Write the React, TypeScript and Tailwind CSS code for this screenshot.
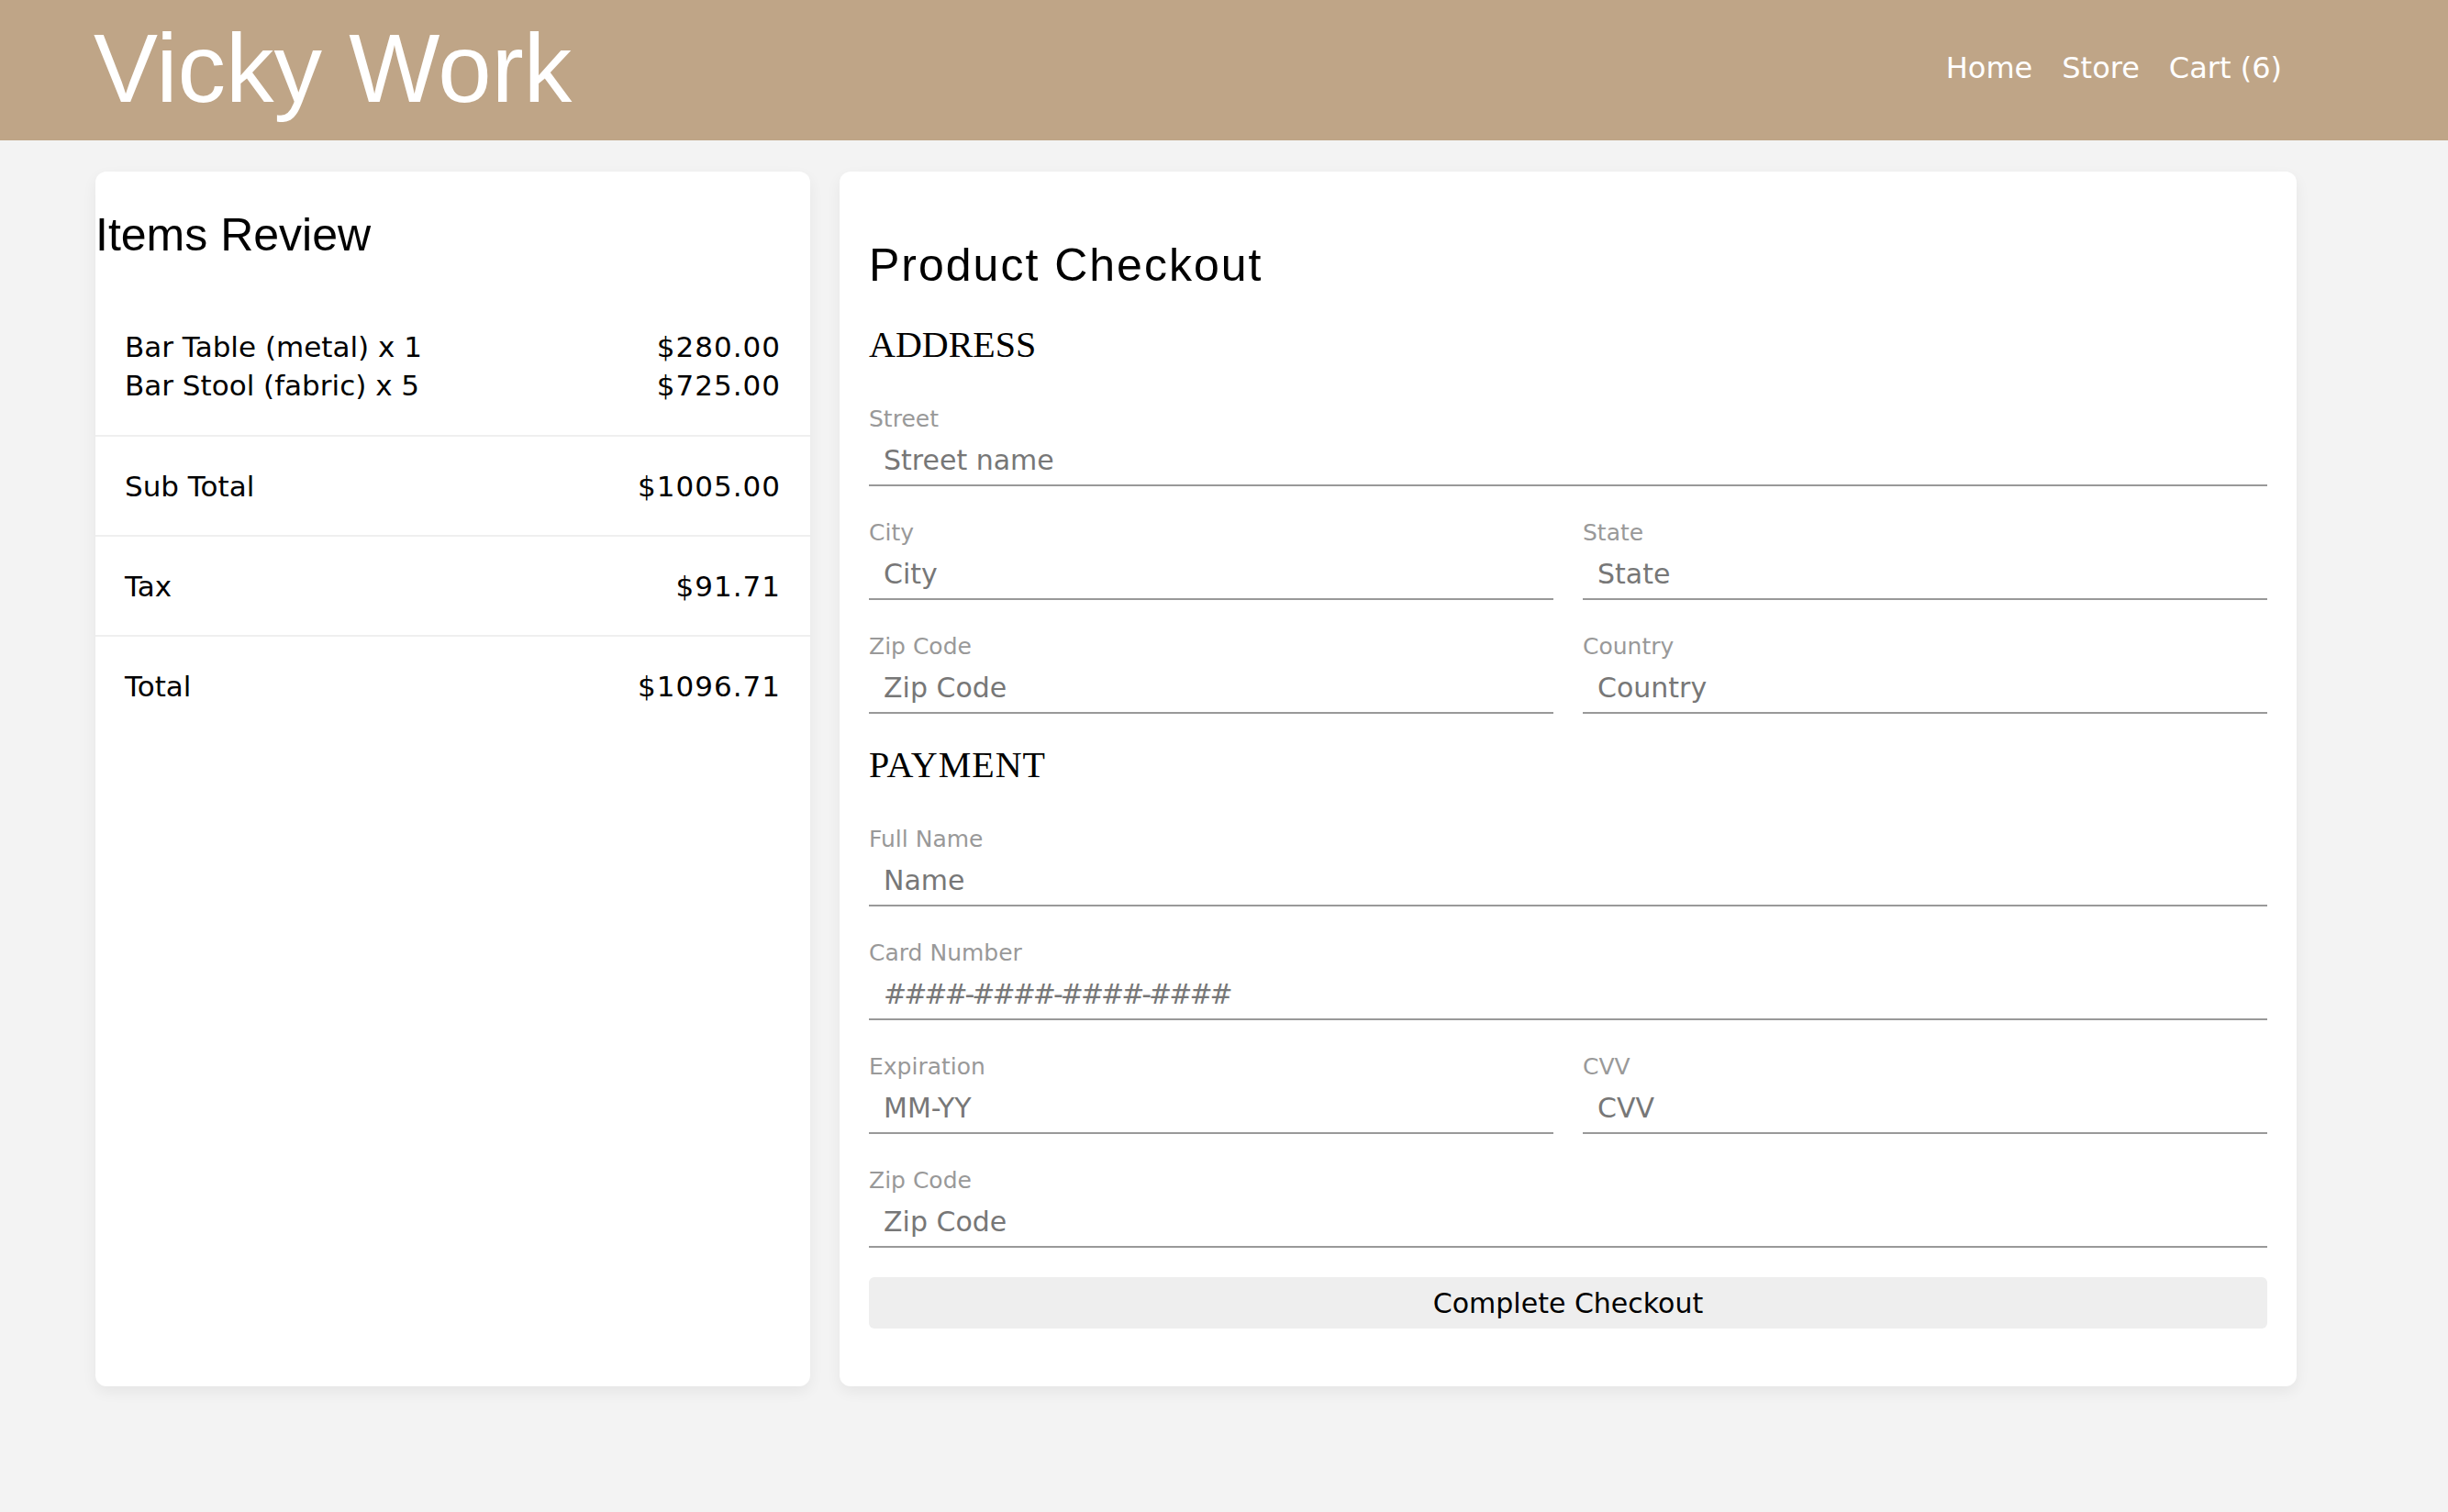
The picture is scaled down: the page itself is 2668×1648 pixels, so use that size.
import React from 'react';

const items = [
  { name: 'Bar Table (metal) x 1', price: '$280.00' },
  { name: 'Bar Stool (fabric) x 5', price: '$725.00' },
];

const totals = [
  { label: 'Sub Total', value: '$1005.00' },
  { label: 'Tax', value: '$91.71' },
  { label: 'Total', value: '$1096.71' },
];

type FieldProps = {
  label: string;
  placeholder: string;
  className?: string;
  inputClass?: string;
};

const Field: React.FC<FieldProps> = ({ label, placeholder, className = '', inputClass = '' }) => (
  <div className={`flex flex-col ${className}`}>
    <label className="text-[25px] leading-none text-[#999999]">{label}</label>
    <input
      type="text"
      placeholder={placeholder}
      className={`mt-[5px] h-[56px] w-full border-b-2 border-[#999999] bg-transparent px-4 text-[30px] text-[#555555] outline-none placeholder:text-[#777777] ${inputClass}`}
    />
  </div>
);

const App: React.FC = () => {
  return (
    <div className="min-h-[1648px] bg-[#f3f3f3] font-['DejaVu_Sans',sans-serif] text-black">
      <header className="flex h-[153px] items-center justify-between bg-[#bfa587] pb-[5px] pl-[102px] pr-[181px]">
        <h1 className="font-['Liberation_Sans',Arial,sans-serif] text-[105px] leading-none text-white">
          Vicky Work
        </h1>
        <nav className="flex items-center gap-8 text-[32px] text-white">
          <a href="#">Home</a>
          <a href="#">Store</a>
          <a href="#">Cart (6)</a>
        </nav>
      </header>

      <main className="grid grid-cols-[779px_1588px] gap-8 pl-[104px] pt-[34px]">
        <section className="flex flex-col rounded-[12px] bg-white shadow-[0_6px_16px_rgba(0,0,0,0.06)]">
          <h2 className="mt-[44px] mb-[44px] font-['Liberation_Sans',Arial,sans-serif] text-[50px] leading-none">
            Items Review
          </h2>
          <div className="px-8 pt-8 pb-[33px] text-[31px] leading-[42px]">
            {items.map((item) => (
              <div key={item.name} className="flex justify-between">
                <span>{item.name}</span>
                <span className="tracking-[1px]">{item.price}</span>
              </div>
            ))}
          </div>
          {totals.map((row) => (
            <div
              key={row.label}
              className="flex justify-between border-t-2 border-[#efefef] px-8 pt-[33px] pb-[32px] text-[31px] leading-[42px]"
            >
              <span>{row.label}</span>
              <span className="tracking-[1px]">{row.value}</span>
            </div>
          ))}
        </section>

        <section className="flex flex-col rounded-[12px] bg-white px-8 pb-[63px] shadow-[0_6px_16px_rgba(0,0,0,0.06)]">
          <h2 className="mt-[77px] font-['Liberation_Sans',Arial,sans-serif] text-[50px] leading-none tracking-[2px]">
            Product Checkout
          </h2>

          <h3 className="mt-[42px] font-['Liberation_Serif','Times_New_Roman',serif] text-[40px] leading-none">
            ADDRESS
          </h3>
          <div className="mt-[48px] grid grid-cols-2 gap-x-8 gap-y-[38px]">
            <Field className="col-span-2" label="Street" placeholder="Street name" />
            <Field label="City" placeholder="City" />
            <Field label="State" placeholder="State" />
            <Field label="Zip Code" placeholder="Zip Code" />
            <Field label="Country" placeholder="Country" />
          </div>

          <h3 className="mt-[36px] font-['Liberation_Serif','Times_New_Roman',serif] text-[40px] leading-none tracking-[1px]">
            PAYMENT
          </h3>
          <div className="mt-[48px] grid grid-cols-2 gap-x-8 gap-y-[38px]">
            <Field className="col-span-2" label="Full Name" placeholder="Name" />
            <Field
              className="col-span-2"
              label="Card Number"
              placeholder="####-####-####-####"
              inputClass="tracking-[-3px]"
            />
            <Field label="Expiration" placeholder="MM-YY" />
            <Field label="CVV" placeholder="CVV" />
            <Field className="col-span-2" label="Zip Code" placeholder="Zip Code" />
          </div>

          <button
            type="button"
            className="mt-8 h-[56px] w-full rounded-[6px] bg-[#eeeeee] text-[30px] text-black"
          >
            Complete Checkout
          </button>
        </section>
      </main>
    </div>
  );
};

export default App;
